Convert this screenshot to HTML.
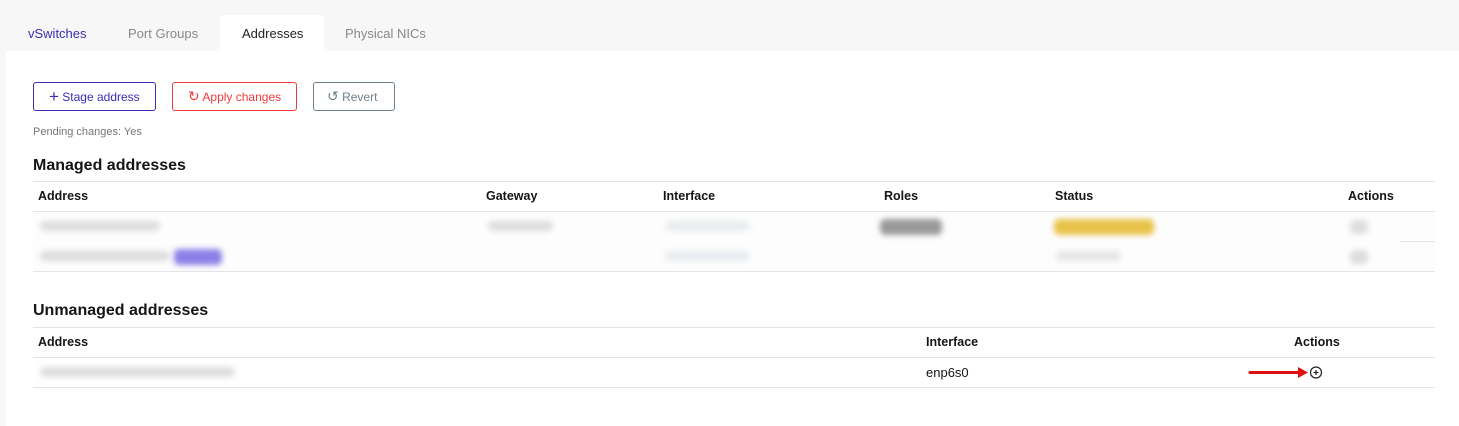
<!DOCTYPE html><html><head><style>
body{margin:0;width:1459px;height:426px;background:#f7f7f8;font-family:"Liberation Sans",sans-serif;position:relative;overflow:hidden;font-size:13px;color:#151515}
.a{position:absolute}
.tab{position:absolute;top:26px;font-size:13px;color:#888}
.panel{position:absolute;left:6px;top:51px;right:0;bottom:0;background:#fff}
.btn{position:absolute;top:82px;height:29px;border:1px solid;border-radius:3px;box-sizing:border-box;font-size:12px;line-height:27px;padding-left:14px}
.ln{position:absolute;left:33px;width:1402px;height:1px;background:#e4e4e4}
.th{position:absolute;font-weight:bold;font-size:12.5px}
.bl{position:absolute;filter:blur(3px);border-radius:5px}
</style></head><body>
<div class="panel"></div>
<div class="a" style="left:220px;top:15px;width:104px;height:37px;background:#fff;border-radius:4px 4px 0 0"></div>
<div class="tab" style="left:28px;color:#3b2db5">vSwitches</div>
<div class="tab" style="left:128px">Port Groups</div>
<div class="tab" style="left:242px;color:#222">Addresses</div>
<div class="tab" style="left:345px">Physical NICs</div>

<div class="btn" style="left:33px;width:123px;border-color:#3b2db5;color:#3b2db5;padding-left:15px"><span style="font-size:17px;vertical-align:-1px">+</span> Stage address</div>
<div class="btn" style="left:172px;width:125px;border-color:#ef3b3b;color:#ef3b3b;padding-left:15px"><span style="font-size:14px">↻</span> Apply changes</div>
<div class="btn" style="left:313px;width:82px;border-color:#6f8088;color:#6f8088;padding-left:13px"><span style="font-size:14px">↺</span> Revert</div>
<div class="a" style="left:33px;top:126px;font-size:11px;color:#777">Pending changes: Yes</div>

<div class="a" style="left:33px;top:157px;font-size:16px;font-weight:bold">Managed addresses</div>
<div class="ln" style="top:181px"></div>
<div class="th" style="left:38px;top:189px">Address</div>
<div class="th" style="left:486px;top:189px">Gateway</div>
<div class="th" style="left:663px;top:189px">Interface</div>
<div class="th" style="left:884px;top:189px">Roles</div>
<div class="th" style="left:1055px;top:189px">Status</div>
<div class="th" style="left:1348px;top:189px">Actions</div>
<div class="ln" style="top:211px"></div>
<div class="a" style="left:33px;top:212px;width:1402px;height:59px;background:#fdfdfd"></div>
<div class="ln" style="top:241px;left:1400px;width:35px"></div>
<div class="bl" style="left:40px;top:221px;width:120px;height:10px;background:#ddd"></div>
<div class="bl" style="left:40px;top:251px;width:130px;height:10px;background:#ddd"></div>
<div class="bl" style="left:174px;top:249px;width:48px;height:16px;background:#8d7fe6"></div>
<div class="bl" style="left:488px;top:221px;width:65px;height:10px;background:#ddd"></div>
<div class="bl" style="left:665px;top:221px;width:85px;height:10px;background:#e8ecef"></div>
<div class="bl" style="left:665px;top:251px;width:85px;height:10px;background:#e8ecef"></div>
<div class="bl" style="left:880px;top:219px;width:62px;height:16px;background:#999"></div>
<div class="bl" style="left:1054px;top:219px;width:100px;height:16px;background:#e9c24a"></div>
<div class="bl" style="left:1056px;top:251px;width:65px;height:10px;background:#e6e6e6"></div>
<div class="bl" style="left:1350px;top:220px;width:18px;height:14px;background:#ddd"></div>
<div class="bl" style="left:1350px;top:250px;width:18px;height:14px;background:#ddd"></div>
<div class="ln" style="top:271px"></div>

<div class="a" style="left:33px;top:302px;font-size:16px;font-weight:bold">Unmanaged addresses</div>
<div class="ln" style="top:327px"></div>
<div class="th" style="left:38px;top:335px">Address</div>
<div class="th" style="left:926px;top:335px">Interface</div>
<div class="th" style="left:1294px;top:335px">Actions</div>
<div class="ln" style="top:357px"></div>
<div class="bl" style="left:40px;top:367px;width:195px;height:10px;background:#ddd"></div>
<div class="a" style="left:926px;top:365px">enp6s0</div>
<svg class="a" style="left:1246px;top:364px" width="80" height="16" viewBox="0 0 80 16">
<path d="M4 8.5 H56" stroke="#e01010" stroke-width="3" stroke-linecap="round"/>
<path d="M52 3 L62 8.5 L52 14 Z" fill="#e01010"/>
<circle cx="70" cy="8.5" r="5.5" fill="none" stroke="#222" stroke-width="1.2"/>
<path d="M70 6v5M67.5 8.5h5" stroke="#222" stroke-width="1.2"/>
</svg>
<div class="ln" style="top:387px"></div>
</body></html>
